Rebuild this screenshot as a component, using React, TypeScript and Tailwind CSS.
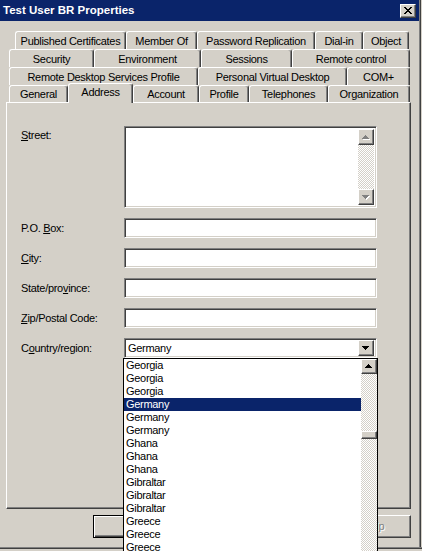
import React from "react";

type TabDef = [string, string];
const rows: { pl: string; h: string; tabs: TabDef[] }[] = [
  {
    pl: "pl-[15px]",
    h: "h-[18px]",
    tabs: [
      ["Published Certificates", "w-[111px]"],
      ["Member Of", "w-[71px]"],
      ["Password Replication", "w-[118px]"],
      ["Dial-in", "w-[48px]"],
      ["Object", "w-[46px]"],
    ],
  },
  {
    pl: "pl-[9px]",
    h: "h-[18px]",
    tabs: [
      ["Security", "w-[85px]"],
      ["Environment", "w-[107px]"],
      ["Sessions", "w-[91px]"],
      ["Remote control", "w-[118px]"],
    ],
  },
  {
    pl: "pl-[9px]",
    h: "h-[18px]",
    tabs: [
      ["Remote Desktop Services Profile", "w-[189px]"],
      ["Personal Virtual Desktop", "w-[149px]"],
      ["COM+", "w-[63px]"],
    ],
  },
  {
    pl: "pl-[9px]",
    h: "h-[17px]",
    tabs: [
      ["General", "w-[59px]"],
      ["Address", "w-[65px]"],
      ["Account", "w-[66px]"],
      ["Profile", "w-[50px]"],
      ["Telephones", "w-[79px]"],
      ["Organization", "w-[82px]"],
    ],
  },
];

const raised =
  "border border-t-white border-l-white border-r-[#404040] border-b-[#404040] shadow-[inset_-1px_-1px_0_#808080] bg-[#d4d0c8]";
const sunken =
  "border border-t-[#808080] border-l-[#808080] border-r-white border-b-white shadow-[inset_1px_1px_0_#404040,inset_-1px_-1px_0_#d4d0c8] bg-white";
const checker =
  "bg-[repeating-conic-gradient(#ffffff_0_25%,#d4d0c8_0_50%)] bg-[length:2px_2px]";

function Arrow({ up, disabled }: { up?: boolean; disabled?: boolean }) {
  const rowsY = up ? [0, 1, 2, 3] : [3, 2, 1, 0];
  const tri = (fill: string, dx: number, dy: number) =>
    rowsY.map((y, i) => (
      <rect key={fill + i} x={3 - i + dx} y={y + dy} width={1 + 2 * i} height={1} fill={fill} />
    ));
  return (
    <svg width="8" height="5" viewBox="0 0 8 5" shapeRendering="crispEdges">
      {disabled && tri("#ffffff", 1, 1)}
      {tri(disabled ? "#808080" : "#000000", 0, 0)}
    </svg>
  );
}

function ScrollBtn({ up, disabled, h = "h-[15px]" }: { up?: boolean; disabled?: boolean; h?: string }) {
  return (
    <div className={`w-[16px] ${h} ${raised} flex items-center justify-center shrink-0`}>
      <Arrow up={up} disabled={disabled} />
    </div>
  );
}

function Label({ pre, u, post }: { pre?: string; u: string; post?: string }) {
  return (
    <span>
      {pre}
      <span className="underline underline-offset-[1px]">{u}</span>
      {post}
    </span>
  );
}

function Field({ label, children }: { label: React.ReactNode; children?: React.ReactNode }) {
  return (
    <div className="flex items-center h-[20px]">
      <div className="w-[103px]">{label}</div>
      <div className={`w-[253px] h-[20px] ${sunken} flex items-center`}>{children}</div>
    </div>
  );
}

const items = [
  "Georgia",
  "Georgia",
  "Georgia",
  "Germany",
  "Germany",
  "Germany",
  "Ghana",
  "Ghana",
  "Ghana",
  "Gibraltar",
  "Gibraltar",
  "Gibraltar",
  "Greece",
  "Greece",
  "Greece",
];

export default function App() {
  return (
    <div className="w-[422px] h-[551px] bg-[#d4d0c8] relative overflow-hidden font-['Liberation_Sans',Arial,sans-serif] text-[11px] tracking-[-0.3px] text-black leading-none">
      <div className="flex h-[547px]">
        <div className="w-[419px] flex flex-col">
          {/* Title bar */}
          <div className="h-[21px] bg-[#0a246a] flex items-center justify-between pl-[3px] pr-[3px]">
            <span className="text-white font-bold text-[11.5px] tracking-normal">Test User BR Properties</span>
            <div className={`w-[16px] h-[14px] ${raised} flex items-center justify-center`}>
              <svg width="8" height="7" viewBox="0 0 8 7" shapeRendering="crispEdges">
                {[0, 1, 2, 3, 4, 5, 6].map((i) => (
                  <g key={i}>
                    <rect x={i} y={i} width={2} height={1} fill="#000" />
                    <rect x={6 - i} y={i} width={2} height={1} fill="#000" />
                  </g>
                ))}
              </svg>
            </div>
          </div>

          {/* Tabs */}
          <div className="pt-[10px] flex flex-col">
            {rows.map((r, ri) => (
              <div key={ri} className={`flex items-end ${r.pl} ${r.h}`}>
                {r.tabs.map(([label, w]) => {
                  const sel = label === "Address";
                  return (
                    <div
                      key={label}
                      className={`${w} ${
                        sel ? "h-[20px] mb-[-1px] relative z-10 pb-[2px]" : "h-full pt-[1px]"
                      } shrink-0 flex items-center justify-center bg-[#d4d0c8] border-t border-l border-r border-t-white border-l-white border-r-[#404040] rounded-t-[3px] shadow-[inset_-1px_0_0_#808080] whitespace-nowrap`}
                    >
                      {label}
                    </div>
                  );
                })}
              </div>
            ))}
          </div>

          {/* Panel */}
          <div
            className={`ml-[6px] w-[405px] h-[407px] ${raised} pt-[23px] pl-[14px] flex flex-col gap-[10px]`}
          >
            <div className="flex items-start">
              <div className="w-[103px] pt-[4px]">
                <Label u="S" post="treet:" />
              </div>
              <div className={`w-[253px] h-[82px] ${sunken} flex justify-end p-[2px]`}>
                <div className="flex flex-col w-[16px]">
                  <ScrollBtn up disabled h="h-[16px]" />
                  <div className={`flex-1 ${checker}`} />
                  <ScrollBtn disabled h="h-[16px]" />
                </div>
              </div>
            </div>
            <Field label={<Label pre="P.O. " u="B" post="ox:" />} />
            <Field label={<Label u="C" post="ity:" />} />
            <Field label={<Label pre="State/pro" u="v" post="ince:" />} />
            <Field label={<Label u="Z" post="ip/Postal Code:" />} />
            <div className="flex items-center h-[20px]">
              <div className="w-[103px]">
                <Label pre="C" u="o" post="untry/region:" />
              </div>
              <div className={`w-[253px] h-[20px] ${sunken} flex items-center p-[2px]`}>
                <span className="flex-1 pl-[1px]">Germany</span>
                <ScrollBtn h="h-[16px]" />
              </div>
            </div>
          </div>

          {/* Buttons */}
          <div className="flex justify-end gap-[6px] pr-[8px] mt-[6px]">
            <div className="w-[75px] h-[23px] border border-black shadow-[inset_1px_1px_0_#fff,inset_-1px_-1px_0_#404040,inset_-2px_-2px_0_#808080] flex items-center justify-center">
              OK
            </div>
            <div className={`w-[75px] h-[23px] ${raised} flex items-center justify-center`}>Cancel</div>
            <div className={`w-[75px] h-[23px] ${raised} flex items-center justify-center text-[#808080] [text-shadow:1px_1px_0_#fff]`}>
              Apply
            </div>
            <div className={`w-[75px] h-[23px] ${raised} flex items-center justify-center text-[#808080] [text-shadow:1px_1px_0_#fff]`}>
              Help
            </div>
          </div>
        </div>
        {/* right frame */}
        <div className="w-[3px] flex">
          <div className="w-[1px] bg-[#808080]" />
          <div className="w-[1px] bg-[#404040]" />
          <div className="w-[1px] bg-[#d4d0c8]" />
        </div>
      </div>
      <div className="h-[1px] bg-[#808080]" />
      <div className="h-[1px] bg-[#404040]" />

      {/* Dropdown list (overlay) */}
      <div className="absolute left-[123px] top-[358px] w-[255px] h-[200px] border border-black bg-white flex">
        <div className="flex-1 flex flex-col">
          {items.map((it, i) => (
            <div
              key={i}
              className={`h-[13px] shrink-0 leading-[13px] pl-[2px] ${i === 3 ? "bg-[#0a246a] text-white" : ""}`}
            >
              {it}
            </div>
          ))}
        </div>
        <div className={`w-[16px] flex flex-col ${checker}`}>
          <ScrollBtn up h="h-[15px]" />
          <div className={`mt-[57px] w-[16px] h-[8px] ${raised}`} />
        </div>
      </div>
    </div>
  );
}
